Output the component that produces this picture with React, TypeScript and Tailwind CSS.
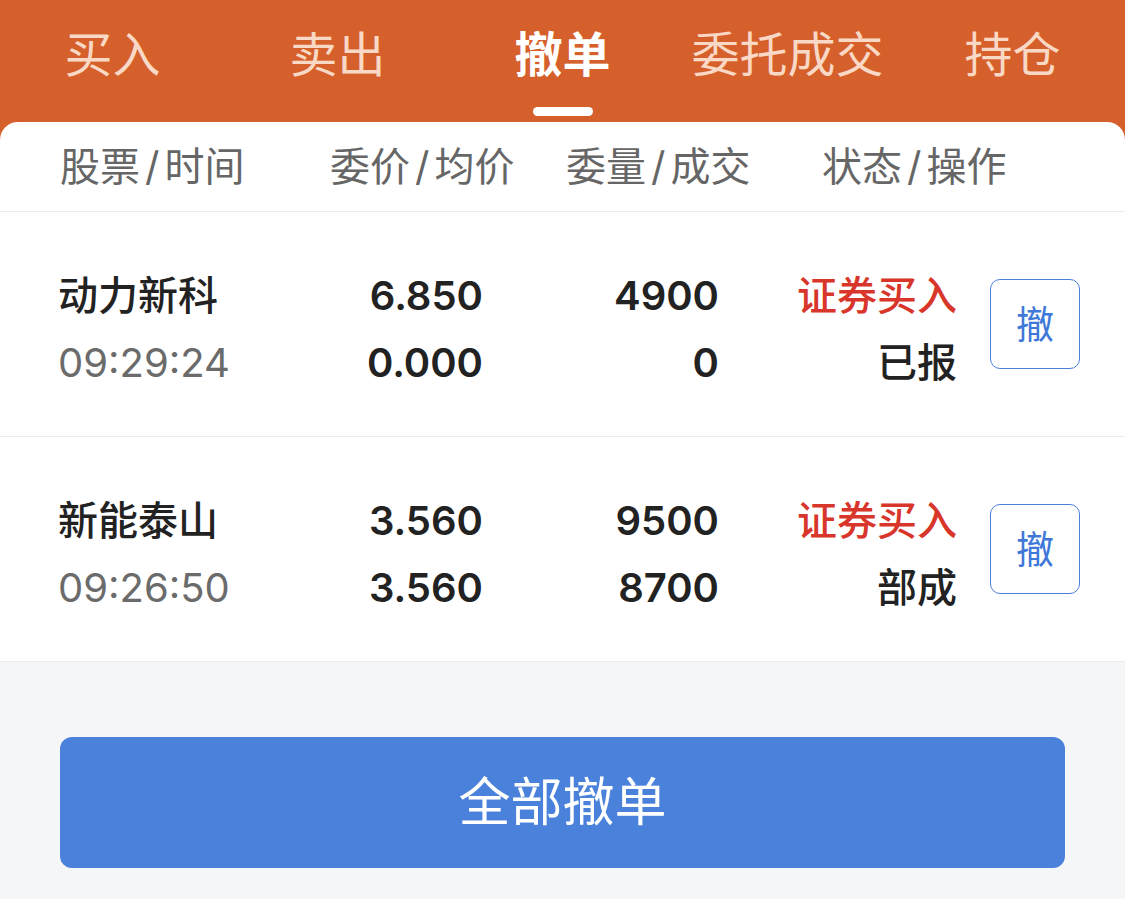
const tabs = ['买入', '卖出', '撤单', '委托成交', '持仓']
const activeTab = 2

interface Order {
  name: string
  time: string
  price: string
  avg: string
  qty: string
  filled: string
  side: string
  status: string
}

const orders: Order[] = [
  { name: '动力新科', time: '09:29:24', price: '6.850', avg: '0.000', qty: '4900', filled: '0', side: '证券买入', status: '已报' },
  { name: '新能泰山', time: '09:26:50', price: '3.560', avg: '3.560', qty: '9500', filled: '8700', side: '证券买入', status: '部成' },
]

const headers = [
  ['股票', '时间'],
  ['委价', '均价'],
  ['委量', '成交'],
  ['状态', '操作'],
]

const font = "font-['Inter','Noto_Sans_CJK_SC',sans-serif]"

const OrderRow = ({ o }: { o: Order }) => {
  return (
    <div className="grid h-[225px] grid-cols-[200px_225px_236px_238px_123px] items-center border-b border-[#ebebeb] bg-white pl-[58px] pr-[46px]">
      <div className="flex flex-col pt-[9px]">
        <span className="text-[40px] leading-[67px] font-medium text-[#222]">{o.name}</span>
        <span className="text-[40px] leading-[67px] text-[#6b6b6b]">{o.time}</span>
      </div>
      <div className="flex flex-col items-end pt-[9px]">
        <span className="text-[40px] leading-[67px] font-semibold text-[#222]">{o.price}</span>
        <span className="text-[40px] leading-[67px] font-semibold text-[#222]">{o.avg}</span>
      </div>
      <div className="flex flex-col items-end pt-[9px]">
        <span className="text-[40px] leading-[67px] font-semibold text-[#222]">{o.qty}</span>
        <span className="text-[40px] leading-[67px] font-semibold text-[#222]">{o.filled}</span>
      </div>
      <div className="flex flex-col items-end pt-[9px]">
        <span className="text-[40px] leading-[67px] font-medium text-[#d9362b]">{o.side}</span>
        <span className="text-[40px] leading-[67px] font-medium text-[#222]">{o.status}</span>
      </div>
      <button className="flex h-[90px] w-[90px] items-center justify-center justify-self-end rounded-[10px] border-[1.5px] border-[#4a80db] text-[38px] text-[#3f78d8]">
        撤
      </button>
    </div>
  )
}

const App = (): JSX.Element => {
  return (
    <div className={`${font} min-h-screen w-full bg-[#f5f6f8]`}>
      <div className="bg-[#d6602b]">
        <div className="grid h-[122px] grid-cols-5">
          {tabs.map((t, i) => (
            <div key={t} className="flex flex-col items-center pt-[28px]">
              <span
                className={
                  i === activeTab
                    ? 'text-[48px] leading-[54px] font-bold text-white'
                    : 'text-[48px] leading-[54px] text-[#f9d8c5]'
                }
              >
                {t}
              </span>
              {i === activeTab && <div className="mt-[25px] h-[9px] w-[60px] rounded-full bg-white" />}
            </div>
          ))}
        </div>
        <div className="grid h-[90px] grid-cols-[270px_236px_256px_1fr] items-center rounded-t-[18px] border-b border-[#ebebeb] bg-white pl-[60px] text-[40px] text-[#666]">
          {headers.map(([a, b]) => (
            <span key={a}>
              {a}
              <span className="mx-[5px]">/</span>
              {b}
            </span>
          ))}
        </div>
      </div>
      {orders.map((o) => (
        <OrderRow key={o.name} o={o} />
      ))}
      <div className="px-[60px] pt-[75px]">
        <button className="flex h-[131px] w-full items-center justify-center rounded-[12px] bg-[#4a81db] text-[52px] text-white">
          全部撤单
        </button>
      </div>
    </div>
  )
}

export default App
